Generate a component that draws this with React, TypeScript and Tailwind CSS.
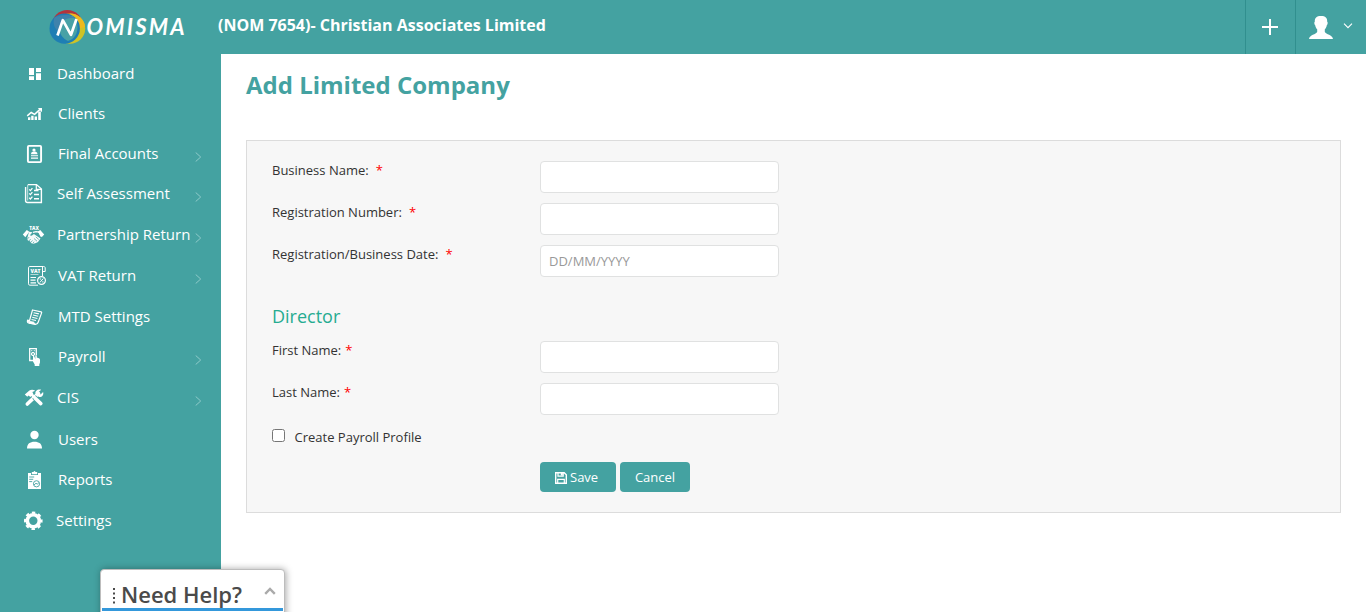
import type { ReactNode } from "react";

type Item = {
  label: string;
  row: string;
  pad: string;
  chevron?: boolean;
  icon: ReactNode;
};

/* Icons are drawn in a 28x24 box whose origin is the middle of the row. */
const items: Item[] = [
  {
    label: "Dashboard",
    row: "h-10",
    pad: "pl-[9px]",
    icon: <path d="M29-6h5v7h-5zM29 2.300h5V6h-5zM36-6h5v4h-5zM36-.700h5V6h-5z" fill="#fff" />,
  },
  {
    label: "Clients",
    row: "h-10",
    pad: "pl-[10px]",
    icon: (
      <>
        <path d="M28 3.200h2.400V6H28zM31.200 1.800h2.400V6h-2.400zM34.600 2.500H37V6h-2.400zM38.200-2.500h2.600V6h-2.600z" fill="#fff" />
        <path d="M27.200 1.800l4-3.300 3.400 1.800L40-4.600" fill="none" stroke="#fff" strokeWidth="1.500" />
        <path d="M37.800-6h4.200v4.200z" fill="#fff" />
      </>
    ),
  },
  {
    label: "Final Accounts",
    row: "h-10",
    pad: "pl-[10px]",
    chevron: true,
    icon: (
      <>
        <rect x="27.900" y="-8.100" width="13.200" height="16.200" rx="1" fill="none" stroke="#fff" strokeWidth="1.900" />
        <circle cx="34" cy="-4" r="1.600" fill="#fff" />
        <path d="M31 .2c0-2 1.400-2.700 3-2.700S37.500-2 37.500.2zM31 1.300h7v1h-7zM31 3.600h7v1.200h-7z" fill="#fff" />
      </>
    ),
  },
  {
    label: "Self Assessment",
    row: "h-10",
    pad: "pl-[9px]",
    chevron: true,
    icon: (
      <g fill="none" stroke="#fff">
        <path d="M25.600-7v14.500M28-9.400h8.500l4.900 4.400V8.500H27.500c-1.200 0-1.900-.600-1.900-1.700" strokeWidth="1.400" />
        <path d="M27.700-9.400V6.500" strokeWidth="1" opacity=".7" />
        <path d="M36.300-9.400v4.700h5" strokeWidth="1.200" />
        <path d="M29.200-4.600l1.200 1.200 2-2.400M29.200-.6l1.200 1.200 2-2.400M29.200 3.800L30.400 5l2-2.400" strokeWidth="1.300" />
        <path d="M34-3.500h4.500M34 .5h5M34 4.700h5" strokeWidth="1.500" />
      </g>
    ),
  },
  {
    label: "Partnership Return",
    row: "h-[42px]",
    pad: "pl-[9px]",
    chevron: true,
    icon: (
      <>
        <text x="29.200" y="-4.600" fontSize="5.800" fontWeight="800" fill="#fff" textLength="9.600" lengthAdjust="spacingAndGlyphs" fontFamily="Open Sans, sans-serif">
          TAX
        </text>
        <path d="M22.800-.5l4-4.500 2.500 1.700-4 5.600zM44.200-.5l-4-4.500-2.500 1.700 4 5.600z" fill="#fff" />
        <path d="M29-3.200l3.500.4-2.600 3c1.600 1.200 3-.2 4-1.200L40.500 3.600 39 5.400l-1 1.500-2 1-2.600.9-2-.6-1.500-2-2-.7-.7-2z" fill="#fff" opacity=".95" />
        <path d="M33-2.600l3-.8 3 .5 2 4.400" fill="none" stroke="#fff" strokeWidth="1.200" />
        <path d="M27.400 4l1.800-2M28.900 6l1.800-2M30.900 7.400l1.600-2M33 8.400l1-1.700M34 3.500l3 2.700M35.800 1.900l3 2.600" stroke="#44a2a1" strokeWidth=".7" />
      </>
    ),
  },
  {
    label: "VAT Return",
    row: "h-10",
    pad: "pl-[10px]",
    chevron: true,
    icon: (
      <g fill="none" stroke="#fff" strokeWidth="1">
        <path d="M43-4.500h2.200V-8c0-1-.700-1.500-1.500-1.500H29.800c-.9 0-1.300.5-1.300 1.300V7.800c0 .9.500 1.400 1.300 1.400H38M42.500-9.500V0" />
        <text x="30.500" y="-3" fontSize="5.400" fontWeight="800" fill="#fff" stroke="none" textLength="10" lengthAdjust="spacingAndGlyphs" fontFamily="Open Sans, sans-serif">
          VAT
        </text>
        <path d="M30.500-1.500h8" opacity=".6" />
        <path d="M30.500 1.500h5.500M30.500 4.200h5M30.500 6.800h5.500" strokeWidth="1.200" />
        <circle cx="41.500" cy="4.500" r="3.900" strokeWidth="1.200" />
        <path d="M39.800 6.500l3.500-4M39.700 3h1.400M42.100 5.900h1.400" />
      </g>
    ),
  },
  {
    label: "MTD Settings",
    row: "h-[42px]",
    pad: "pl-[10px]",
    icon: (
      <g fill="none" stroke="#fff">
        <path d="M32.500-7l8.700 1.800c.6.200.5.800.3 1.300L38.300 5c-.6 2-2.300 2.600-4 2.200L28.500 6c-1.200-.4-1.300-1.600-.9-2.700l1.900.4z" strokeWidth="1.200" />
        <path d="M28 4l6 1.200c0 1.200.5 2 1.500 2l-6.500-1z" fill="#fff" strokeWidth=".8" />
        <path d="M33.600-4.300l5.300 1.200M33-2l5.200 1.200M32.200.3l5.200 1.200M31.500 2.500l4.500 1" strokeWidth="1.100" />
      </g>
    ),
  },
  {
    label: "Payroll",
    row: "h-[38px]",
    pad: "pl-[10px]",
    chevron: true,
    icon: (
      <>
        <path d="M34 3.500h-4.300V-8.400h6.600v6.500" fill="none" stroke="#fff" strokeWidth="1.300" />
        <circle cx="33" cy="-3" r="1.700" fill="none" stroke="#fff" strokeWidth="1" />
        <path d="M33-4v2M31-6.300h1.400M33.700-6.300h1.400" stroke="#fff" strokeWidth=".8" />
        <path d="M33-.9c.8-.4 1.300 0 1.500.7l.8 2.500V-1c0-1.200 1.500-1.200 1.500 0v1.500l2.100.8c.8.300 1.100.8 1.100 1.700V5.300c0 1-.6 1.400-.7 2.200V9h-4.600V7.400L33 4.500z" fill="#fff" />
      </>
    ),
  },
  {
    label: "CIS",
    row: "h-11",
    pad: "pl-[9px]",
    chevron: true,
    icon: (
      <>
        <path d="M27.300 6L38.500-4.600" stroke="#fff" strokeWidth="3.600" strokeLinecap="round" />
        <path d="M41.200-8.300L38.600-5.900l.4 1.800 1.800.4 2.300-2.400c.8 2.800-.8 5.500-4.200 5.200l-3.500-3.500c-.4-3.200 2.700-5 5.800-3.900z" fill="#fff" />
        <path d="M24.800-3.600l4.600-4c1.700-1 4.200-.9 5.800.3l-2.800 1.200.9 2.200-2.900 3-1.900-1.600-1.200 1.200z" fill="#fff" />
        <path d="M34-1l6.600 6.400" stroke="#44a2a1" strokeWidth="4.800" />
        <path d="M30.500-4.500l4.500 4.300" stroke="#fff" strokeWidth="2.600" />
        <path d="M35.200.2l5.600 5.400" stroke="#fff" strokeWidth="3.600" strokeLinecap="round" />
      </>
    ),
  },
  {
    label: "Users",
    row: "h-10",
    pad: "pl-[10px]",
    icon: (
      <>
        <circle cx="34.500" cy="-5" r="4.200" fill="#fff" />
        <path d="M27 8.500c0-4.800 3-6.800 7.500-6.800s7.500 2 7.500 6.800z" fill="#fff" />
      </>
    ),
  },
  {
    label: "Reports",
    row: "h-10",
    pad: "pl-[10px]",
    icon: (
      <>
        <path d="M28-7h3v2h7v-2h3V9H28z" fill="#fff" />
        <path d="M31.800-8h1.700c.3-1.500 1.700-1.500 2 0h1.700v2.200h-5.400z" fill="#fff" />
        <g fill="none" stroke="#44a2a1" strokeWidth=".9">
          <path d="M29.200-3h5M29.200-.7h4M29.200 1.600h3" />
          <circle cx="36.500" cy="3.800" r="3.100" />
          <path d="M34 5l2-1.800 1.200 1 1.800-1.600" />
        </g>
      </>
    ),
  },
  {
    label: "Settings",
    row: "h-[42px]",
    pad: "pl-2",
    icon: (
      <>
        <circle cx="33.300" cy="-.2" r="6" fill="none" stroke="#fff" strokeWidth="3.600" />
        <circle cx="33.300" cy="-.2" r="8.200" fill="none" stroke="#fff" strokeWidth="2.200" strokeDasharray="3.400 3.040" strokeDashoffset="1.700" />
      </>
    ),
  },
];

function Logo() {
  return (
    <svg width="140" height="38" viewBox="48 8 140 38" className="block shrink-0">
      <circle cx="67.300" cy="25.500" r="15.500" fill="#b5333b" />
      <circle cx="70" cy="28.600" r="15.200" fill="#cfc326" />
      <path d="M70 13.400a15.200 15.200 0 0 1 15 13.600l-8 2-9-12z" fill="#eeb91f" />
      <circle cx="64.700" cy="28.600" r="15.200" fill="#1e7eb4" />
      <path d="M77.500 27.500c0 6.200-3 11.500-9.500 13.500-5.500-2.500-8.500-7-9-13-.3-5 2.500-10 6.500-12.500l7 .5c3.500 2.700 5 6.700 5 11.500z" fill="#48a1a6" />
      <path d="M54.500 17.500c6-3.500 15-3.500 20.500.500-6-.5-10.500.8-13.500 4.300-2.200 2.700-3 6-2.700 9.500-4.800-3.500-6.300-9-4.300-14.300z" fill="#3f82ac" />
      <path d="M57.500 35.500l5.300-15.300 8.200 14.600 5.500-15.800" fill="none" stroke="#fff" strokeWidth="2.700" strokeLinejoin="round" />
      <text x="86.500" y="35.400" fill="#fff" fontFamily="Lato, sans-serif" fontStyle="italic" fontWeight="700" fontSize="22" textLength="98" lengthAdjust="spacing">
        OMISMA
      </text>
    </svg>
  );
}

function Field({ label, gap, placeholder }: { label: string; gap: string; placeholder?: string }) {
  return (
    <div className="flex h-8">
      <label className="w-[268px] leading-[18px]">
        {label}
        <span className={`text-[#ff0000] ${gap}`}>*</span>
      </label>
      <input
        type="text"
        placeholder={placeholder}
        className="h-8 w-[239px] rounded-[4px] border border-[#e0e1e1] bg-white px-2 text-[13px] outline-none placeholder:text-[#999]"
      />
    </div>
  );
}

export default function App() {
  return (
    <div className="relative flex h-[612px] w-[1366px] flex-col overflow-hidden bg-white font-['Open_Sans',sans-serif] text-[13px] text-[#333]">
      <header className="flex h-[54px] shrink-0 bg-[#44a2a1] text-white">
        <div className="w-[218px] pt-2 pl-12">
          <Logo />
        </div>
        <h2 className="flex-1 pt-[13px] text-[16px] leading-6 font-bold">(NOM 7654)- Christian Associates Limited</h2>
        <button className="flex w-[50px] items-center border-l border-[#318f8e] pl-4">
          <svg width="16" height="16" viewBox="0 0 16 16">
            <path d="M7 0h2v16H7zM0 7h16v2H0z" fill="#fff" />
          </svg>
        </button>
        <button className="flex w-[71px] items-center border-l border-[#318f8e] pl-[13px]">
          <svg width="24" height="26" viewBox="0 0 24 26">
            <path d="M12 2c4.400 0 6.500 1.800 6.200 5.800.8.300.6 2.700-.4 3.500-.4 2.200-1.200 3.300-2 4v2.700c1.200 2.400 7.600 2.700 8.200 7H0c.6-4.300 7-4.600 8.200-7v-2.700c-.8-.7-1.600-1.800-2-4-1-.8-1.200-3.200-.4-3.500C5.500 3.800 7.600 2 12 2z" fill="#fff" />
          </svg>
          <svg width="10" height="6" viewBox="0 0 10 6" className="mb-[2px] ml-[10px]">
            <path d="M1 .7l4 4 4-4" fill="none" stroke="#fff" strokeWidth="1.100" />
          </svg>
        </button>
      </header>

      <div className="flex flex-1">
        <nav className="w-[221px] shrink-0 bg-[#44a2a1] pl-5 text-[15px] text-white">
          {items.map((it) => (
            <a key={it.label} className={`flex items-center ${it.row}`}>
              <svg width="28" height="24" viewBox="20 -12 28 24" className="block shrink-0">
                {it.icon}
              </svg>
              <span className={`mb-[2px] w-[147px] whitespace-nowrap ${it.pad}`}>{it.label}</span>
              {it.chevron && (
                <svg width="7" height="10" viewBox="0 0 7 10" className="mt-[6px] shrink-0">
                  <path d="M.7.500l5 4.500-5 4.500" fill="none" stroke="#8ecac9" strokeWidth="1" />
                </svg>
              )}
            </a>
          ))}
        </nav>

        <main className="flex-1 pt-[13px] pr-[25px] pl-[25px]">
          <h1 className="text-[24px] leading-9 font-bold text-[#44a2a1]">Add Limited Company</h1>
          <form className="mt-[37px] h-[373px] border border-[#dcdcdc] bg-[#f7f7f7] px-[25px] pt-5">
            <div className="flex flex-col gap-[10px]">
              <Field label="Business Name:" gap="ml-[7px]" />
              <Field label="Registration Number:" gap="ml-[7px]" />
              <Field label="Registration/Business Date:" gap="ml-[7px]" placeholder="DD/MM/YYYY" />
            </div>
            <h3 className="mt-[27px] text-[18px] leading-6 text-[#26ac91]">Director</h3>
            <div className="mt-[13px] flex flex-col gap-[10px]">
              <Field label="First Name:" gap="ml-1" />
              <Field label="Last Name:" gap="ml-1" />
            </div>
            <label className="mt-[13px] flex h-[18px] items-center">
              <input type="checkbox" className="mb-[3px] h-[13px] w-[13px]" />
              <span className="mt-[2px] ml-[9.500px]">Create Payroll Profile</span>
            </label>
            <div className="mt-4 flex gap-1 pl-[268px] text-white">
              <button type="button" className="flex h-[30px] w-[76px] items-center rounded-[4px] bg-[#44a2a1] pt-px pl-[15px]">
                <svg width="12" height="12" viewBox="0 0 12 12" className="mr-[3px]">
                  <path d="M.700.700h8.500l2.100 2.100v8.500H.700z" fill="none" stroke="#fff" strokeWidth="1.400" />
                  <path d="M3 .600v3.600h5.200V.600M2.700 11.400V7.300h6.600v4.100" fill="none" stroke="#fff" strokeWidth="1.200" />
                  <path d="M5.800.800h2v2.700h-2z" fill="#fff" />
                </svg>
                Save
              </button>
              <button type="button" className="h-[30px] w-[70px] rounded-[4px] bg-[#44a2a1] pt-px">
                Cancel
              </button>
            </div>
          </form>
        </main>
      </div>

      <div className="absolute top-[569px] left-[100px] flex h-[50px] w-[185px] rounded-[4px] border border-[#bdbdbd] bg-white px-px shadow-[1px_0_7px_rgba(0,0,0,0.35)]">
        <div className="flex h-[41px] w-full border-b-[3px] border-[#3498db] pl-[11px] text-[#4a4a4a]">
          <svg width="3" height="16" viewBox="0 0 3 16" className="mt-[18px]">
            <path d="M0 0h2v2H0zM0 4.500h2v2H0zM0 9h2v2H0zM0 13.500h2v2H0z" fill="#4a4a4a" />
          </svg>
          <span className="ml-[5px] w-[143px] pt-[9px] text-[22px] leading-[30px] font-semibold whitespace-nowrap">Need Help?</span>
          <svg width="12" height="8" viewBox="0 0 12 8" className="mt-[17px] shrink-0">
            <path d="M1.200 6.800L6 2l4.800 4.800" fill="none" stroke="#aaa" strokeWidth="2.400" />
          </svg>
        </div>
      </div>
    </div>
  );
}
